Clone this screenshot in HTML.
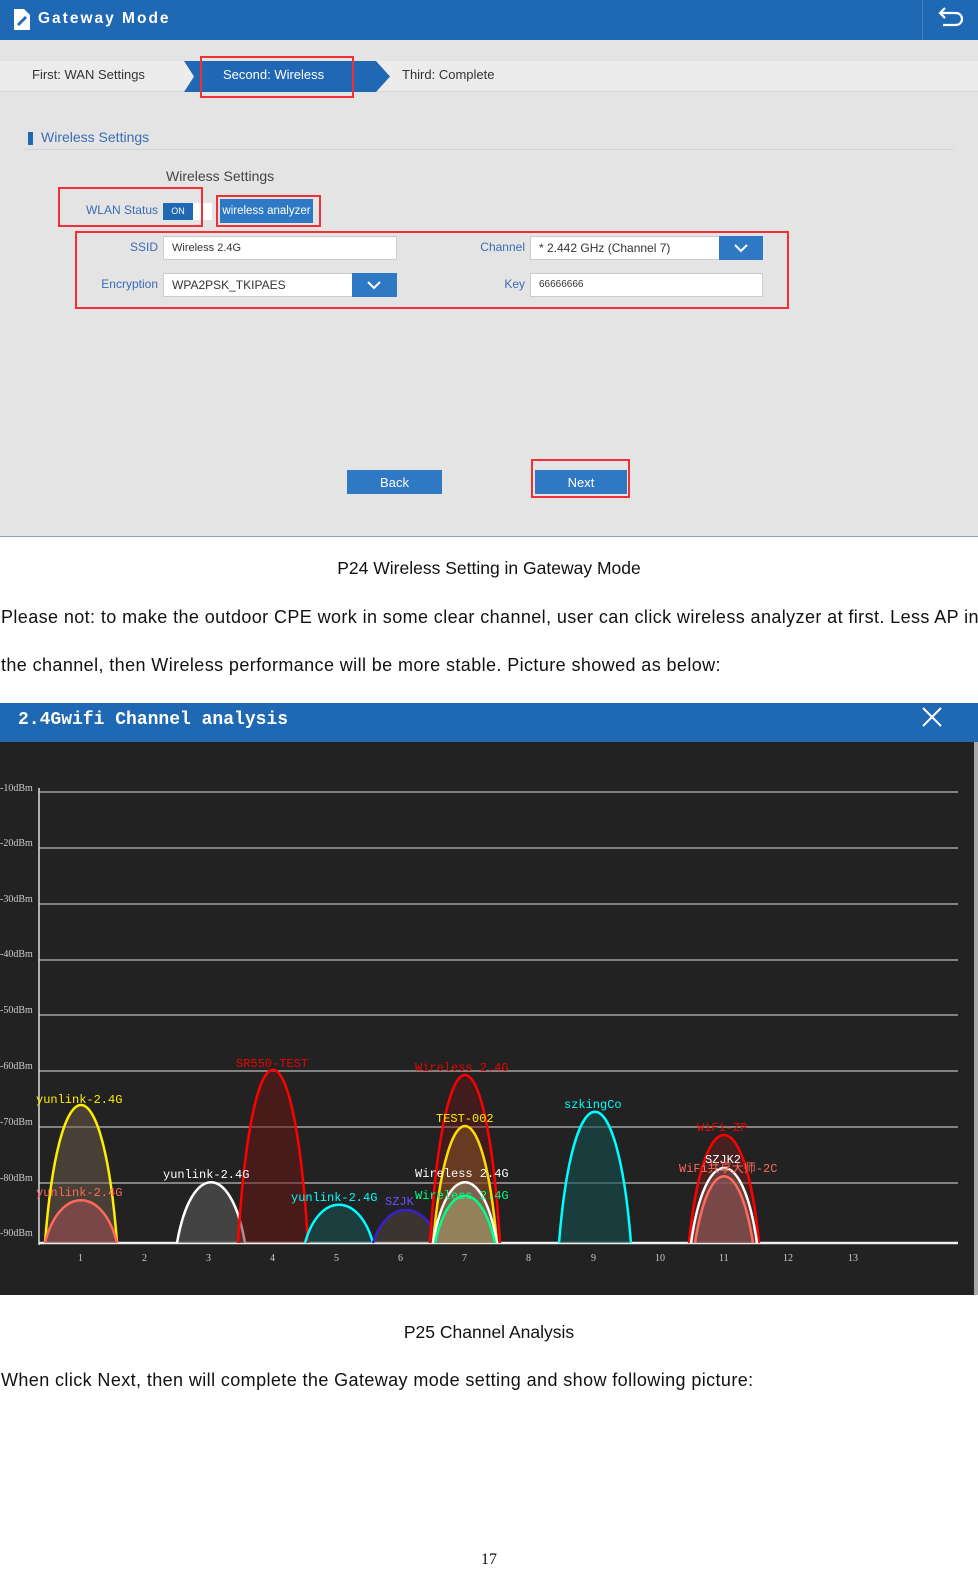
<!DOCTYPE html>
<html><head><meta charset="utf-8"><style>
*{margin:0;padding:0;box-sizing:border-box}
body{width:978px;height:1570px;background:#fff;position:relative;font-family:"Liberation Sans","Noto Sans CJK SC",sans-serif;overflow:hidden}
.a{position:absolute}
.red{position:absolute;border:2px solid #f03035}
.lbl{position:absolute;color:#3a6db3;font-size:12px;text-align:right}
.inp{position:absolute;background:#fff;border:1px solid #ccc;font-size:11px;color:#333;padding-left:8px;line-height:22px}
.dd{position:absolute;background:#2f78c4;}
.p{position:absolute;left:1px;font-size:18px;letter-spacing:0.4px;color:#111;white-space:nowrap}
</style></head><body>
<div class="a" style="left:0;top:0;width:978px;height:40px;background:#1f68b3"></div>
<svg class="a" style="left:12px;top:8px" width="20" height="24" viewBox="0 0 20 24"><path d="M2 1h10l6 6v15H2z" fill="#fff"/><path d="M5 16l8-8 2 2-8 8z" fill="#1f68b3"/></svg>
<div class="a" style="left:38px;top:10px;color:#fff;font-weight:bold;font-size:15.5px;letter-spacing:2px">Gateway Mode</div>
<div class="a" style="left:922px;top:0;width:1px;height:40px;background:#3d7fc4"></div>
<svg class="a" style="left:935px;top:6px" width="30" height="26" viewBox="0 0 30 26"><path d="M6 7h15a6 6 0 0 1 0 12H8" fill="none" stroke="#fff" stroke-width="2.2"/><path d="M10 2L5 7l5 5" fill="none" stroke="#fff" stroke-width="2.2"/></svg>
<div class="a" style="left:0;top:40px;width:978px;height:496px;background:#e4e4e4"></div>
<div class="a" style="left:0;top:536px;width:978px;height:1px;background:#8aa0bd"></div>
<div class="a" style="left:0;top:61px;width:978px;height:31px;background:#ececec;border-bottom:1px solid #d8d8d8"></div>
<div class="a" style="left:32px;top:67px;font-size:13px;color:#333">First: WAN Settings</div>
<svg class="a" style="left:184px;top:61px" width="208" height="31"><polygon points="0,0 192,0 206,15.5 192,31 0,31 10,15.5" fill="#2068b4"/></svg>
<div class="a" style="left:223px;top:67px;font-size:13px;color:#fff">Second: Wireless</div>
<div class="a" style="left:402px;top:67px;font-size:13px;color:#333">Third: Complete</div>
<div class="red" style="left:200px;top:56px;width:154px;height:42px"></div>
<div class="a" style="left:28px;top:132px;width:5px;height:13px;background:#2068b4"></div>
<div class="a" style="left:41px;top:129px;font-size:14px;color:#3a6db3">Wireless Settings</div>
<div class="a" style="left:24px;top:149px;width:930px;height:1px;background:#cfd6df"></div>
<div class="a" style="left:166px;top:168px;font-size:14px;color:#444">Wireless Settings</div>
<div class="lbl" style="left:60px;top:203px;width:98px">WLAN Status</div>
<div class="a" style="left:163px;top:203px;width:30px;height:17px;background:#2068b4;color:#fff;font-size:9px;text-align:center;line-height:17px">ON</div>
<div class="a" style="left:193px;top:203px;width:19px;height:17px;background:#fff"></div>
<div class="red" style="left:58px;top:187px;width:145px;height:40px"></div>
<div class="a" style="left:220px;top:199px;width:93px;height:24px;background:#2f78c4;color:#fff;font-size:11.5px;line-height:25px;text-align:center">wireless analyzer</div>
<div class="red" style="left:216px;top:195px;width:105px;height:32px"></div>
<div class="red" style="left:75px;top:231px;width:714px;height:78px"></div>
<div class="lbl" style="left:80px;top:240px;width:78px">SSID</div>
<div class="inp" style="left:163px;top:236px;width:234px;height:24px">Wireless 2.4G</div>
<div class="lbl" style="left:80px;top:277px;width:78px">Encryption</div>
<div class="inp" style="left:163px;top:273px;width:190px;height:24px;font-size:12px">WPA2PSK_TKIPAES</div>
<div class="dd" style="left:352px;top:273px;width:45px;height:24px"></div>
<svg class="a" style="left:366px;top:280px" width="16" height="10"><path d="M2 2l6 6 6-6" fill="none" stroke="#fff" stroke-width="2"/></svg>
<div class="lbl" style="left:450px;top:240px;width:75px">Channel</div>
<div class="inp" style="left:530px;top:236px;width:190px;height:24px;font-size:12px">* 2.442 GHz (Channel 7)</div>
<div class="dd" style="left:719px;top:236px;width:44px;height:24px"></div>
<svg class="a" style="left:733px;top:243px" width="16" height="10"><path d="M2 2l6 6 6-6" fill="none" stroke="#fff" stroke-width="2"/></svg>
<div class="lbl" style="left:450px;top:277px;width:75px">Key</div>
<div class="inp" style="left:530px;top:273px;width:233px;height:24px;font-size:10px">66666666</div>
<div class="a" style="left:347px;top:470px;width:95px;height:24px;background:#2f78c4;color:#fff;font-size:13px;text-align:center;line-height:26px">Back</div>
<div class="a" style="left:535px;top:470px;width:92px;height:24px;background:#2f78c4;color:#fff;font-size:13px;text-align:center;line-height:26px">Next</div>
<div class="red" style="left:531px;top:459px;width:99px;height:39px"></div>

<div class="a" style="left:0;top:558px;width:978px;text-align:center;font-size:17.5px;color:#111">P24 Wireless Setting in Gateway Mode</div>
<div class="p" style="top:607px">Please not: to make the outdoor CPE work in some clear channel, user can click wireless analyzer at first. Less AP in</div>
<div class="p" style="top:655px">the channel, then Wireless performance will be more stable. Picture showed as below:</div>

<div class="a" style="left:0;top:703px;width:978px;height:39px;background:#1f68b3"></div>
<div class="a" style="left:18px;top:710px;color:#fff;font-family:'Liberation Mono',monospace;font-weight:bold;font-size:18px">2.4Gwifi Channel analysis</div>
<svg class="a" style="left:920px;top:705px" width="24" height="24"><path d="M3 3l18 18M21 3L3 21" stroke="#fff" stroke-width="2"/></svg>
<svg class="a" style="left:0;top:742px" width="978" height="553" viewBox="0 742 978 553" font-family="Liberation Mono,Noto Sans CJK SC,monospace">
<rect x="0" y="742" width="978" height="553" fill="#222"/>
<rect x="974" y="742" width="4" height="553" fill="#aaa"/>
<g stroke="#bbb" stroke-width="1.2">
<line x1="39" y1="792" x2="958" y2="792"/><line x1="39" y1="848" x2="958" y2="848"/><line x1="39" y1="904" x2="958" y2="904"/><line x1="39" y1="960" x2="958" y2="960"/><line x1="39" y1="1015" x2="958" y2="1015"/><line x1="39" y1="1071" x2="958" y2="1071"/><line x1="39" y1="1127" x2="958" y2="1127"/><line x1="39" y1="1183" x2="958" y2="1183"/>
</g>
<line x1="39" y1="788" x2="39" y2="1245" stroke="#ddd" stroke-width="1.5"/>
<line x1="39" y1="1243" x2="958" y2="1243" stroke="#eee" stroke-width="2.5"/>
<g fill="#ccc" font-size="10" font-family="Liberation Serif,serif">
<text x="0" y="791">-10dBm</text><text x="0" y="846">-20dBm</text><text x="0" y="902">-30dBm</text><text x="0" y="957">-40dBm</text><text x="0" y="1013">-50dBm</text><text x="0" y="1069">-60dBm</text><text x="0" y="1125">-70dBm</text><text x="0" y="1181">-80dBm</text><text x="0" y="1236">-90dBm</text>
<text x="78" y="1261">1</text><text x="142" y="1261">2</text><text x="206" y="1261">3</text><text x="270" y="1261">4</text><text x="334" y="1261">5</text><text x="398" y="1261">6</text><text x="462" y="1261">7</text><text x="526" y="1261">8</text><text x="591" y="1261">9</text><text x="655" y="1261">10</text><text x="719" y="1261">11</text><text x="783" y="1261">12</text><text x="848" y="1261">13</text>
</g>
<g stroke-width="2.5">
<path d="M45 1243C59 1059 103 1059 117 1243" stroke="#ffee00" fill="rgba(120,100,80,.45)"/>
<path d="M45 1243C59 1186 103 1186 117 1243" stroke="#ff6a5a" fill="rgba(170,80,90,.5)"/>
<path d="M177 1243C191 1162 231 1162 245 1243" stroke="#fff" fill="rgba(90,90,90,.6)"/>
<path d="M238 1243C252 1012 294 1012 308 1243" stroke="#f00" fill="rgba(110,20,20,.5)"/>
<path d="M305 1243C319 1192 359 1192 373 1243" stroke="#0ff" fill="rgba(20,90,90,.5)"/>
<path d="M373 1243C387 1199 425 1199 439 1243" stroke="#3a1fd0" fill="rgba(100,80,70,.4)"/>
<path d="M430 1243C444 1019 486 1019 500 1243" stroke="#f00" fill="rgba(110,20,20,.4)"/>
<path d="M433 1243C447 1087 483 1087 497 1243" stroke="#ffdd00" fill="rgba(140,90,40,.5)"/>
<path d="M433 1243C447 1162 483 1162 497 1243" stroke="#fff" fill="rgba(150,140,120,.5)"/>
<path d="M435 1243C449 1180 481 1180 495 1243" stroke="#0f8" fill="rgba(160,150,100,.6)"/>
<path d="M559 1243C573 1068 617 1068 631 1243" stroke="#0ff" fill="rgba(20,80,80,.6)"/>
<path d="M689 1243C703 1099 745 1099 759 1243" stroke="#f00" fill="rgba(110,30,30,.5)"/>
<path d="M691 1243C705 1143 743 1143 757 1243" stroke="#fff" fill="rgba(130,90,90,.5)"/>
<path d="M695 1243C709 1154 739 1154 753 1243" stroke="#ff6a5a" fill="rgba(150,90,90,.4)"/>
</g>
<g font-size="12">
<text x="36" y="1103" fill="#ffee00">yunlink-2.4G</text>
<text x="36" y="1196" fill="#ff6a5a">yunlink-2.4G</text>
<text x="163" y="1178" fill="#fff">yunlink-2.4G</text>
<text x="236" y="1067" fill="#e00">SR550-TEST</text>
<text x="291" y="1201" fill="#0ff">yunlink-2.4G</text>
<text x="415" y="1071" fill="#e00">Wireless 2.4G</text>
<text x="436" y="1122" fill="#ffee00">TEST-002</text>
<text x="415" y="1177" fill="#fff">Wireless 2.4G</text>
<text x="385" y="1205" fill="#6a4fff">SZJK</text>
<text x="415" y="1199" fill="#0f8">Wireless 2.4G</text>
<text x="564" y="1108" fill="#0ff">szkingCo</text>
<text x="697" y="1131" fill="#e00">WiFi-ZP</text>
<text x="705" y="1163" fill="#fff">SZJK2</text>
<text x="679" y="1172" fill="#ff6a5a">WiFi共享大师-2C</text>
</g>
</svg>

<div class="a" style="left:0;top:1322px;width:978px;text-align:center;font-size:17.5px;color:#111">P25 Channel Analysis</div>
<div class="p" style="top:1370px">When click Next, then will complete the Gateway mode setting and show following picture:</div>
<div class="a" style="left:0;top:1551px;width:978px;text-align:center;font-size:16px;color:#111;font-family:'Liberation Serif',serif">17</div>
</body></html>
